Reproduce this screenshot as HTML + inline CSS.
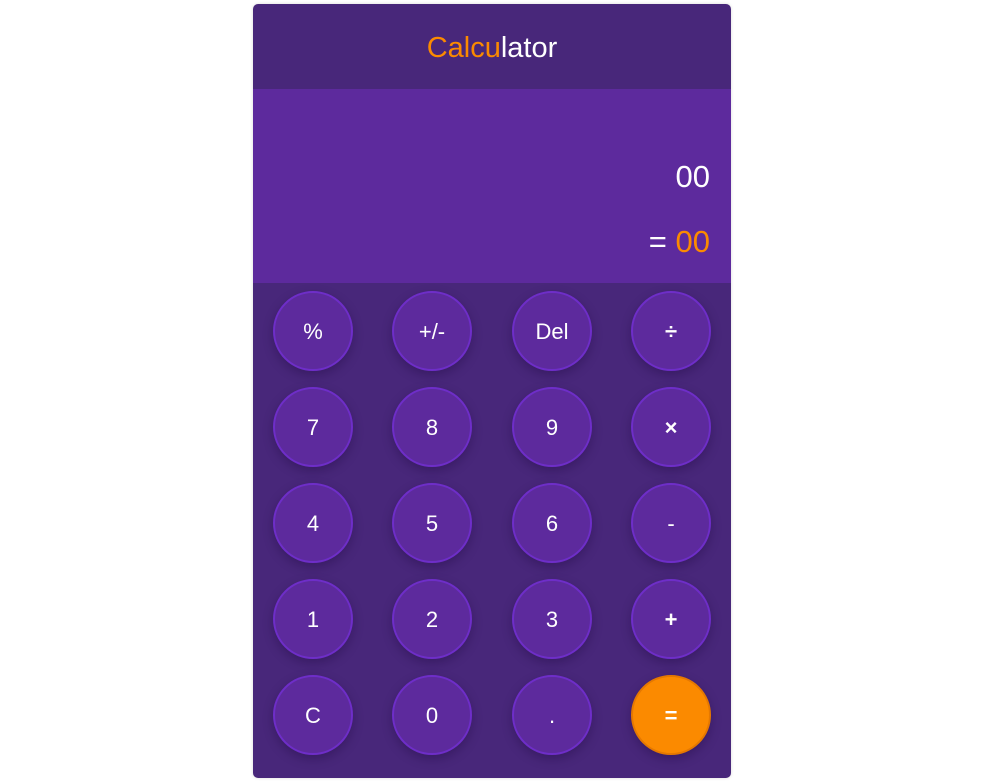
<!DOCTYPE html>
<html><head><meta charset="utf-8"><style>
*{box-sizing:border-box;margin:0;padding:0}
body{width:990px;height:781px;background:#fff;font-family:"Liberation Sans",sans-serif;position:relative;overflow:hidden}
.card{position:absolute;left:253px;top:4px;width:478px;height:774px;background:#48277a;border-radius:5px;overflow:hidden;box-shadow:0 0 3px rgba(0,0,0,.15)}
.hdr{height:85px;text-align:center;line-height:88px;font-size:29px;color:#fff}
.hdr span{color:#fb8a00}
.disp{position:absolute;top:85px;left:0;width:478px;height:194px;background:#5d2a9d;color:#fff}
.l1{position:absolute;right:21px;top:70px;font-size:31px}
.l2{position:absolute;right:21px;top:135px;font-size:31px}
.l2 span{color:#fb8a00}
.b{position:absolute;width:80px;height:80px;border-radius:50%;background:#5d2a9d;border:2px solid #6e2ec8;color:#fff;font-size:22px;display:flex;align-items:center;justify-content:center;padding-top:2px;box-shadow:0 4px 10px rgba(30,10,60,.35)}
.eq{background:#fb8a00;border-color:#e57800}
.s{font-weight:bold}
</style></head><body>
<div class="card">
<div class="hdr"><span>Calcu</span>lator</div>
<div class="disp"><div class="l1">00</div><div class="l2">= <span>00</span></div></div>
</div>
<div id="g"></div>
<script>
var k=[["%","+/-","Del","÷"],["7","8","9","×"],["4","5","6","-"],["1","2","3","+"],["C","0",".","="]];
var xs=[273,392,512,631],h="";
k.forEach(function(r,i){r.forEach(function(t,j){var c="b"+(t=="="?" eq":"")+("÷×+=".indexOf(t)>=0?" s":"");h+='<div class="'+c+'" style="left:'+xs[j]+'px;top:'+(291+96*i)+'px">'+t+'</div>';});});
document.getElementById("g").innerHTML=h;
</script>
</body></html>
